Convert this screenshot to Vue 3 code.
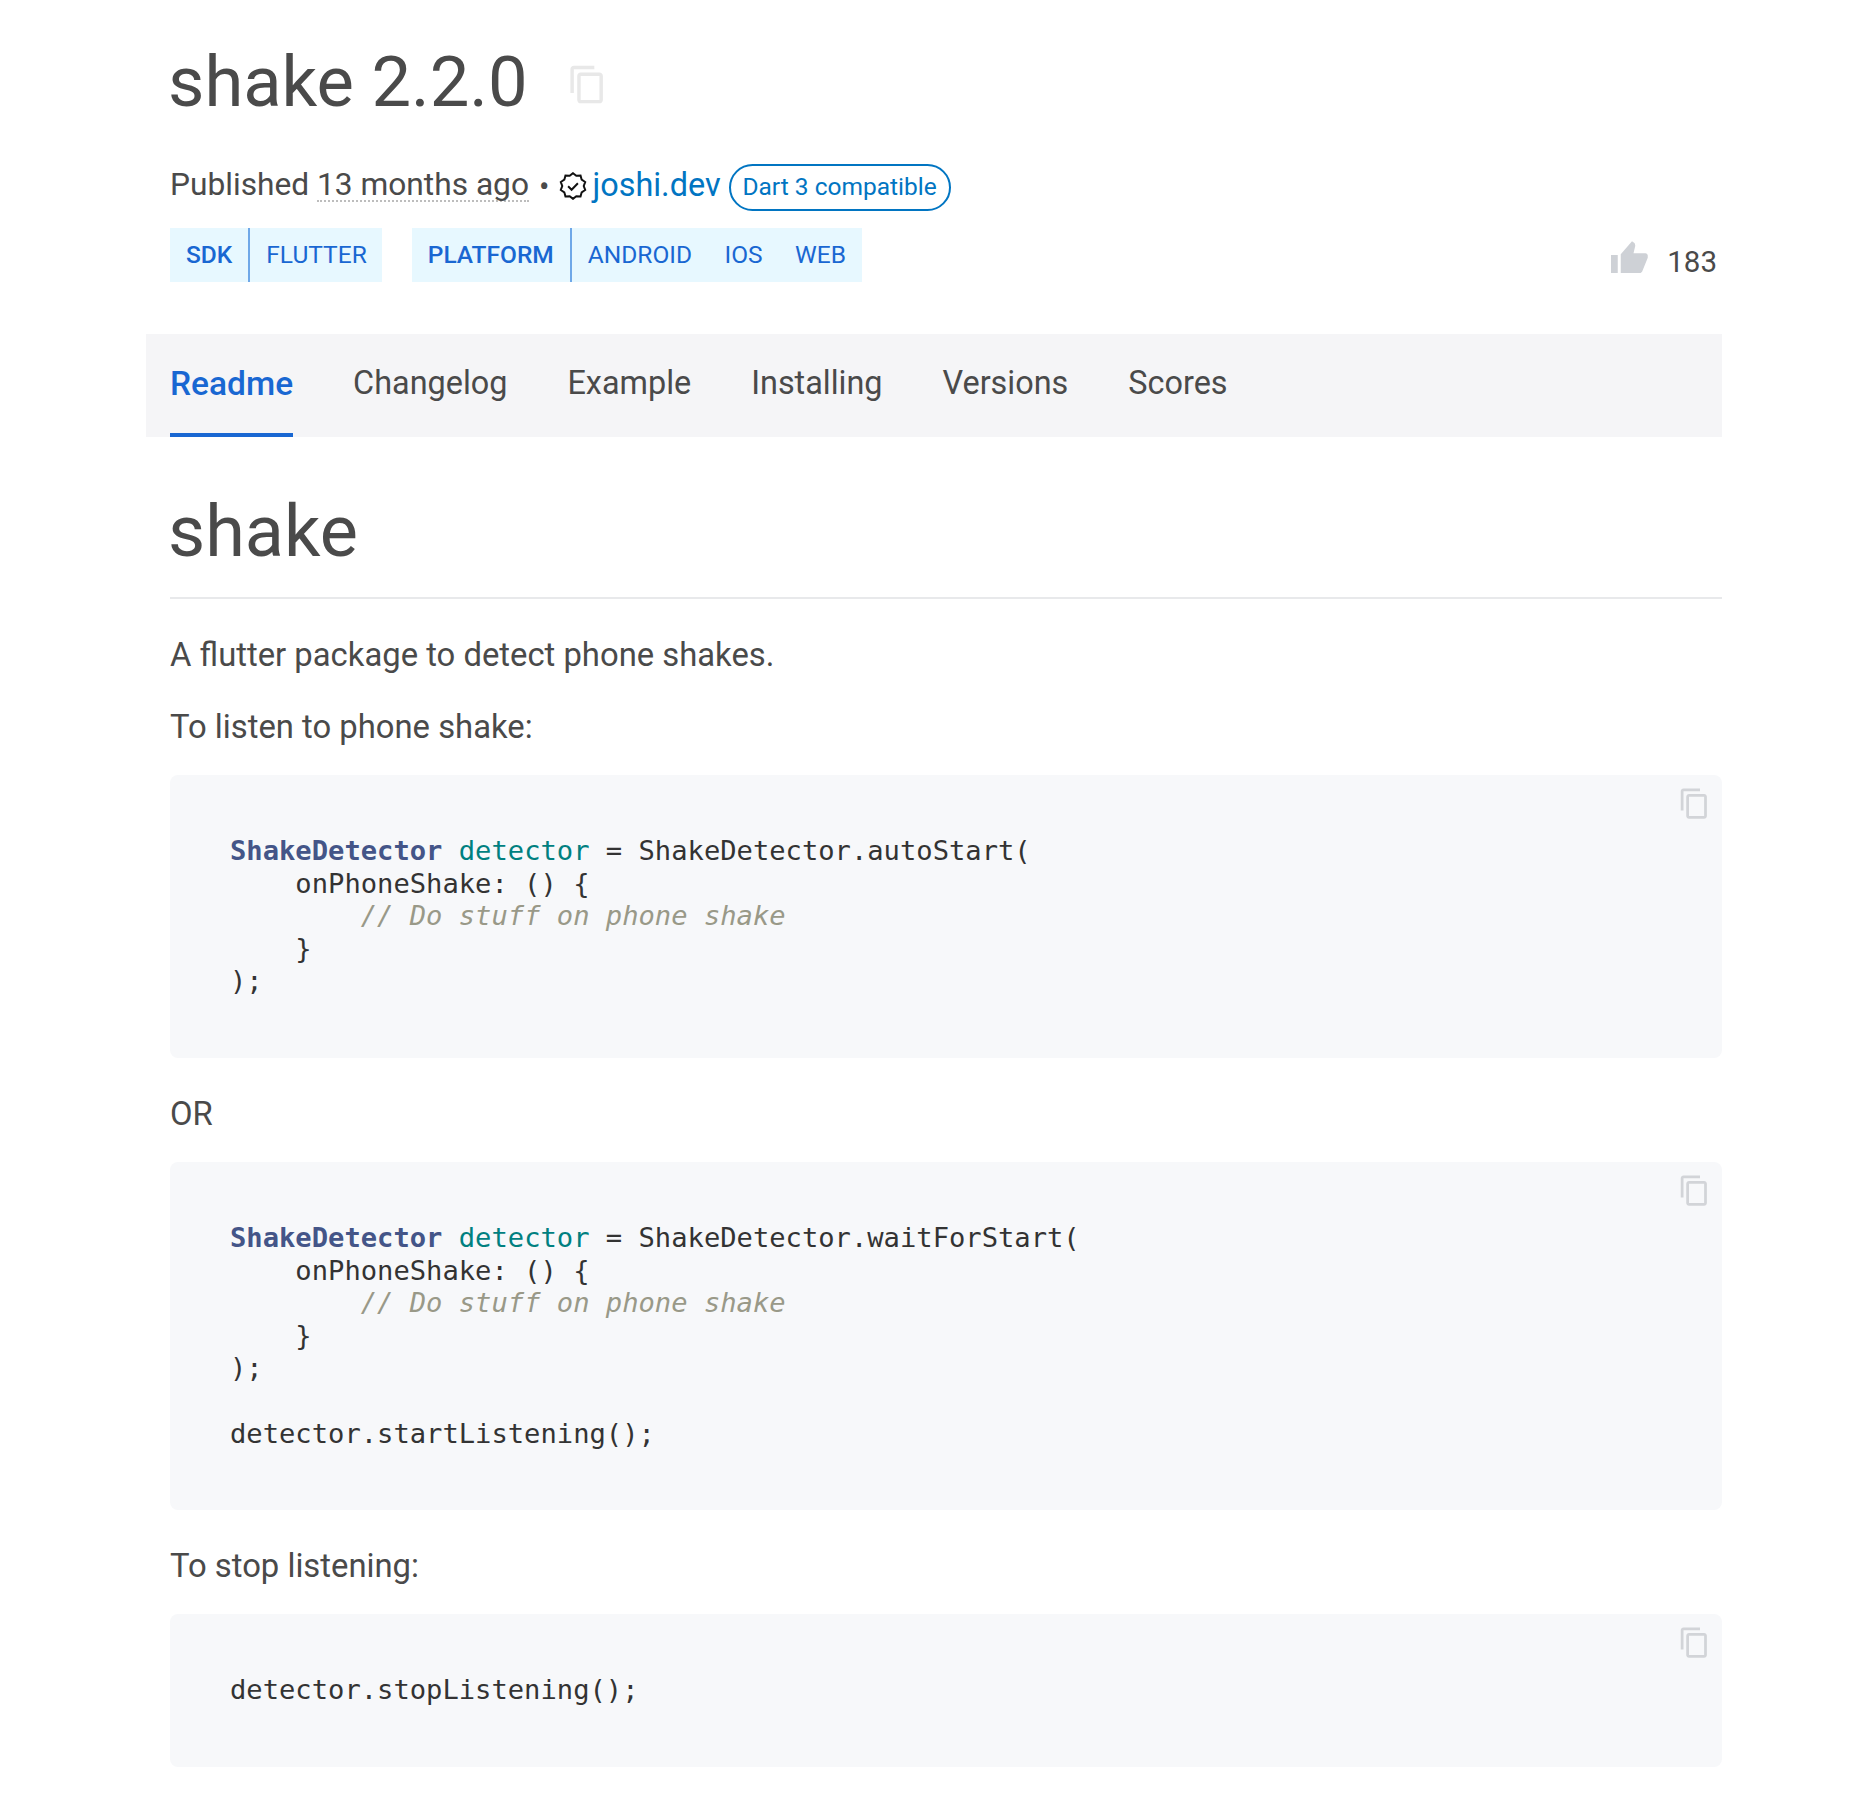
<script setup>
const tabs = ['Readme', 'Changelog', 'Example', 'Installing', 'Versions', 'Scores']
const copyPath = 'M16 1H4c-1.1 0-2 .9-2 2v14h2V3h12V1zm3 4H8c-1.1 0-2 .9-2 2v14c0 1.1.9 2 2 2h11c1.1 0 2-.9 2-2V7c0-1.1-.9-2-2-2zm0 16H8V7h11v14z'
const n = 10
const pts = []
for (let i = 0; i < n * 2; i++) {
  const r = i % 2 ? 9.2 : 11
  const a = (Math.PI * i) / n - Math.PI / 2
  pts.push((12 + r * Math.cos(a)).toFixed(2) + ',' + (12 + r * Math.sin(a)).toFixed(2))
}
const seal = pts.join(' ')
</script>

<template>
  <div class="page">
    <header class="head">
      <h1 class="title">
        <span>shake 2.2.0</span>
        <svg class="title-copy" viewBox="0 0 24 24"><path :d="copyPath" /></svg>
      </h1>
      <div class="meta">
        <span class="lift">Published <span class="ago">13 months ago</span></span>
        <span class="dot">•</span>
        <svg class="seal" viewBox="0 0 24 24">
          <polygon :points="seal" />
          <path d="M7.8 12.2l3 3 5.4-5.6" />
        </svg>
        <a class="pub lift">joshi.dev</a>
        <span class="pill">Dart 3 compatible</span>
      </div>
      <div class="tagrow">
        <div class="tags">
          <div class="tag first">
            <b class="tag-h">SDK</b>
            <span class="tag-v">FLUTTER</span>
          </div>
          <div class="tag">
            <b class="tag-h">PLATFORM</b>
            <span class="tag-v">ANDROID</span>
            <span class="tag-v">IOS</span>
            <span class="tag-v">WEB</span>
          </div>
        </div>
        <div class="likes">
          <svg class="thumb" viewBox="0 0 24 24"><path d="M0 22V10h4.5v12zM6.500 22V9.500L14 .8l1.800 1.400.4 1.600-1.200 5h8c.8 0 1.500.7 1.500 1.500v1.600L20.800 21c-.3.6-.9 1-1.600 1z" /></svg>
          <span class="count">183</span>
        </div>
      </div>
    </header>

    <nav class="tabs">
      <a v-for="(t, i) in tabs" :key="t" class="tab" :class="{ active: i === 0 }">{{ t }}</a>
    </nav>

    <main class="body">
      <h2 class="pkg">shake</h2>
      <p>A flutter package to detect phone shakes.</p>
      <p>To listen to phone shake:</p>
      <div class="code">
        <svg class="code-copy" viewBox="0 0 24 24"><path :d="copyPath" /></svg>
        <pre><span class="ty">ShakeDetector</span> <span class="var">detector</span> = ShakeDetector.autoStart(
    onPhoneShake: () {
        <span class="cm">// Do stuff on phone shake</span>
    }
);</pre>
      </div>
      <p>OR</p>
      <div class="code">
        <svg class="code-copy" viewBox="0 0 24 24"><path :d="copyPath" /></svg>
        <pre><span class="ty">ShakeDetector</span> <span class="var">detector</span> = ShakeDetector.waitForStart(
    onPhoneShake: () {
        <span class="cm">// Do stuff on phone shake</span>
    }
);

detector.startListening();</pre>
      </div>
      <p>To stop listening:</p>
      <div class="code">
        <svg class="code-copy" viewBox="0 0 24 24"><path :d="copyPath" /></svg>
        <pre>detector.stopListening();</pre>
      </div>
    </main>
  </div>
</template>

<style>
html, body { background: #fff; }
</style>

<style scoped>
.page {
  width: 1576px;
  height: 1812px;
  margin-left: 146px;
  font-family: Roboto, "Noto Sans", sans-serif;
  color: #4a4a4a;
}
.head { padding: 0 24px; }
.title {
  margin: 0 0 0 -2px;
  padding-top: 50px;
  height: 114px;
  box-sizing: border-box;
  display: flex;
  align-items: center;
  font-size: 70.500px;
  line-height: 84px;
  font-weight: 400;
}
.title-copy { width: 41px; height: 41px; margin-left: 39px; margin-top: 4px; fill: #e8e8e8; }
.meta {
  height: 48px;
  margin-top: 48px;
  display: flex;
  align-items: center;
  font-size: 31.700px;
  white-space: nowrap;
}
.lift { padding-bottom: 3px; }
.ago { border-bottom: 2px dotted #bdbdbd; line-height: 31px; display: inline-block; }
.dot { margin: 0 10px; font-size: 31px; }
.seal { width: 28px; height: 28px; margin-right: 5px; fill: none; stroke: #111; stroke-width: 1.700; }
.pub { color: #0175c2; font-size: 32.400px; }
.pill {
  margin-left: 8px;
  margin-top: 2px;
  width: 222px;
  height: 47px;
  padding-bottom: 2px;
  box-sizing: border-box;
  display: flex;
  align-items: center;
  justify-content: center;
  border: 2px solid #0175c2;
  border-radius: 24px;
  color: #0175c2;
  font-size: 24.500px;
}
.tagrow { display: flex; justify-content: space-between; align-items: center; margin-top: 18px; }
.tags { display: flex; gap: 30px; }
.tag {
  height: 54px;
  display: flex;
  align-items: center;
  background: #e7f8ff;
  color: #1967d2;
  font-size: 24.500px;
  padding-right: 16px;
  padding-bottom: 1px;
  box-sizing: border-box;
}
.tag.first { padding-right: 15px; }
.tag-h {
  height: 54px;
  display: flex;
  align-items: center;
  padding: 0 16px 2px;
  box-sizing: border-box;
  font-weight: 500;
  border-right: 2px solid #6fa8e8;
  margin-right: 16px;
  margin-top: 1px;
}
.tag-v + .tag-v { margin-left: 32.500px; }
.likes { display: flex; align-items: center; gap: 19px; margin-right: -19px; margin-top: 6px; }
.thumb { width: 38px; height: 36px; fill: #ced1d6; }
.count { font-size: 29.500px; font-weight: 400; padding-top: 8px; }
.tabs {
  height: 103px;
  margin-top: 52px;
  padding: 0 24px;
  display: flex;
  gap: 60px;
  background: #f5f5f7;
}
.tab {
  display: flex;
  align-items: center;
  box-sizing: border-box;
  height: 100%;
  padding-bottom: 5px;
  font-size: 32.400px;
  color: #4a4a4a;
}
.tab.active {
  color: #1967d2;
  font-size: 33.500px;
  font-weight: 500;
  padding-bottom: 0;
  border-bottom: 4px solid #1967d2;
}
.body { padding: 0 0 0 24px; }
.pkg {
  margin: 0;
  padding: 51px 0 0;
  height: 162px;
  box-sizing: border-box;
  font-size: 72px;
  line-height: 88px;
  font-weight: 400;
  text-indent: -2px;
  border-bottom: 2px solid #e8e9eb;
}
p { margin: 32px 0 0; font-size: 32.800px; line-height: 48px; }
p + p { margin-top: 24px; }
.code {
  position: relative;
  margin-top: 24px;
  margin-bottom: 32px;
  padding: 60px;
  background: #f7f8fa;
  border-radius: 8px;
}
.code + p { margin-top: 0; }
.code-copy { position: absolute; top: 12px; right: 11px; width: 33px; height: 33px; fill: #d2d4d8; }
pre {
  margin: 0;
  font-family: "DejaVu Sans Mono", monospace;
  font-size: 27.150px;
  line-height: 32.600px;
  color: #333;
}
.ty { color: #445588; font-weight: 700; }
.var { color: #008080; }
.cm { color: #999988; font-style: italic; }
</style>
